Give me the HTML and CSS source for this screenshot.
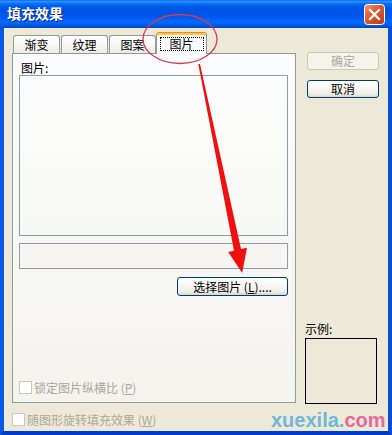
FILE: index.html
```html
<!DOCTYPE html>
<html>
<head>
<meta charset="utf-8">
<link rel="stylesheet" href="styles.css">
</head>
<body>
<div class="window">
  <div class="titlebar">
    <span class="title">填充效果</span>
    <span class="close">
      <svg width="21" height="21" viewBox="0 0 21 21">
        <defs>
          <linearGradient id="cg" x1="0" y1="0" x2="1" y2="1">
            <stop offset="0" stop-color="#f0a080"/>
            <stop offset="0.35" stop-color="#e0643c"/>
            <stop offset="1" stop-color="#b83414"/>
          </linearGradient>
        </defs>
        <rect x="0.5" y="0.5" width="20" height="20" rx="3" fill="url(#cg)" stroke="#ffffff"/>
        <path d="M6 6 L15 15 M15 6 L6 15" stroke="#ffffff" stroke-width="2.2" stroke-linecap="square"/>
      </svg>
    </span>
  </div>
  <div class="client">
    <div class="leftcol">
      <div class="tabs">
        <div class="tab">渐变</div>
        <div class="tab">纹理</div>
        <div class="tab">图案</div>
        <div class="tab sel"><span class="focus">图片</span></div>
      </div>
      <div class="panel">
        <div class="lbl">图片:</div>
        <div class="picbox"></div>
        <div class="namebox"></div>
        <div class="btnrow"><div class="btn wide">选择图片 (<u>L</u>)....</div></div>
        <div class="chk lock"><span class="box"></span>锁定图片纵横比 (<u>P</u>)</div>
      </div>
      <div class="chk rot"><span class="box"></span>随图形旋转填充效果 (<u>W</u>)</div>
    </div>
    <div class="rightcol">
      <div class="btn ok">确定</div>
      <div class="btn cancel">取消</div>
      <div class="sample">
        <div class="slbl">示例:</div>
        <div class="sbox"></div>
      </div>
    </div>
  </div>
  <div class="watermark">xuexila.<span class="com">com</span></div>
  <svg class="annot" width="392" height="435" viewBox="0 0 392 435">
    <ellipse cx="180" cy="39" rx="37" ry="24.5" fill="none" stroke="#d23c4c" stroke-width="1.3"/>
    <polygon points="198.3,64 200,64 241,249 247,247.8 242.2,273 228.2,252 234,250.8" fill="#f01010"/>
  </svg>
</div>
</body>
</html>
```

FILE: styles.css
```css
html, body {
  margin: 0;
  padding: 0;
}
body {
  font-family: "Noto Sans CJK SC", "Liberation Sans", sans-serif;
  font-size: 12px;
  color: #000;
  background: #ffffff;
}
.window {
  position: relative;
  width: 392px;
  height: 435px;
  display: flex;
  flex-direction: column;
  overflow: hidden;
}
.titlebar {
  height: 28px;
  flex: none;
  display: flex;
  align-items: flex-start;
  justify-content: space-between;
  padding: 0 7px 0 7px;
  box-sizing: border-box;
  background: linear-gradient(to bottom,
    #0058ee 0%, #3593ff 4%, #288eff 7%, #127dff 10%, #036ffc 14%,
    #0262ee 20%, #0057e5 28%, #0054e3 34%, #0055eb 56%, #005bf5 66%,
    #026afe 76%, #0062ef 86%, #0052d6 94%, #0046c4 100%);
}
.title {
  color: #ffffff;
  font-weight: bold;
  font-size: 14px;
  line-height: 27px;
  text-shadow: 1px 1px 0 #0a1e80;
}
.close {
  margin-top: 4px;
  width: 21px;
  height: 21px;
  display: block;
}
.close svg {
  display: block;
}
.client {
  flex: 1;
  display: flex;
  background: #ece9d8;
  border-left: 4px solid #0a58e4;
  border-right: 4px solid #0a4ed6;
  border-bottom: 4px solid #003cc8;
  padding-left: 8px;
}
.leftcol {
  width: 284px;
  display: flex;
  flex-direction: column;
}
.tabs {
  height: 21px;
  margin-top: 4px;
  display: flex;
  align-items: flex-end;
  padding-left: 1px;
  gap: 1px;
}
.tab {
  box-sizing: border-box;
  width: 47px;
  height: 18px;
  border: 1px solid #919b9c;
  border-bottom: none;
  border-radius: 3px 3px 0 0;
  background: linear-gradient(to bottom, #ffffff 0%, #f7f7f4 50%, #ecebe5 100%);
  text-align: center;
  line-height: 18px;
}
.tab.sel {
  position: relative;
  z-index: 1;
  width: 51px;
  height: 22px;
  margin-left: -1px;
  margin-bottom: -1px;
  border-top: 1px solid #e68b2c;
  box-shadow: inset 0 2px 0 #ffc73c;
  background: #fcfcfe;
  display: flex;
  justify-content: center;
  align-items: flex-start;
  padding-top: 4px;
}
.focus {
  box-sizing: border-box;
  width: 44px;
  height: 14px;
  border: 1px dotted #000;
  line-height: 12px;
  text-align: center;
}
.panel {
  box-sizing: border-box;
  height: 350px;
  border: 1px solid #919b9c;
  background: linear-gradient(to bottom, #fcfcfe 0%, #f8f8f6 50%, #f4f3ee 100%);
  padding: 7px 7px 0 6px;
  display: flex;
  flex-direction: column;
}
.lbl {
  height: 14px;
  line-height: 14px;
  padding-left: 2px;
}
.picbox {
  box-sizing: border-box;
  height: 161px;
  border: 1px solid #919ba6;
  background: linear-gradient(to bottom, #fdfdfd 0%, #f7f7f5 100%);
}
.namebox {
  box-sizing: border-box;
  height: 26px;
  margin-top: 7px;
  border: 1px solid #919ba6;
  background: #f6f5f1;
}
.btnrow {
  margin-top: 8px;
  display: flex;
  justify-content: flex-end;
}
.btn {
  box-sizing: border-box;
  border: 1px solid #003c74;
  border-radius: 3px;
  background: linear-gradient(to bottom, #ffffff 0%, #f8f7f3 45%, #ecebe4 85%, #d8d4c8 100%);
  text-align: center;
  font-size: 12px;
}
.btn.wide {
  width: 111px;
  height: 19px;
  line-height: 17px;
}
.chk {
  display: flex;
  align-items: center;
  height: 13px;
  line-height: 13px;
  color: #aca899;
}
.chk .box {
  box-sizing: border-box;
  width: 13px;
  height: 13px;
  border: 1px solid #cac8bb;
  background: #ffffff;
  margin-right: 2px;
  flex: none;
}
.chk.lock {
  margin-top: auto;
  margin-bottom: 8px;
}
.chk.rot {
  margin-top: 10px;
}
.rightcol {
  width: 74px;
  margin-left: 9px;
  display: flex;
  flex-direction: column;
}
.btn.ok {
  margin-top: 24px;
  margin-left: 2px;
  width: 72px;
  height: 18px;
  line-height: 16px;
  border-color: #c9c7ba;
  background: #f5f4ea;
  color: #aca899;
}
.btn.cancel {
  margin-top: 10px;
  margin-left: 2px;
  width: 72px;
  height: 18px;
  line-height: 16px;
}
.sample {
  margin-top: auto;
  margin-bottom: 27px;
}
.slbl {
  height: 14px;
  line-height: 14px;
  margin-bottom: 2px;
}
.sbox {
  box-sizing: border-box;
  width: 72px;
  height: 66px;
  border: 1px solid #000;
  background: #ece9d8;
}
.watermark {
  position: absolute;
  left: 271px;
  top: 408px;
  font-family: "Liberation Sans", Arial, sans-serif;
  font-weight: bold;
  font-size: 20px;
  line-height: 24px;
  color: #74b6da;
}
.watermark .com {
  color: #e8689e;
}
.annot {
  position: absolute;
  left: 0;
  top: 0;
  pointer-events: none;
}
```
